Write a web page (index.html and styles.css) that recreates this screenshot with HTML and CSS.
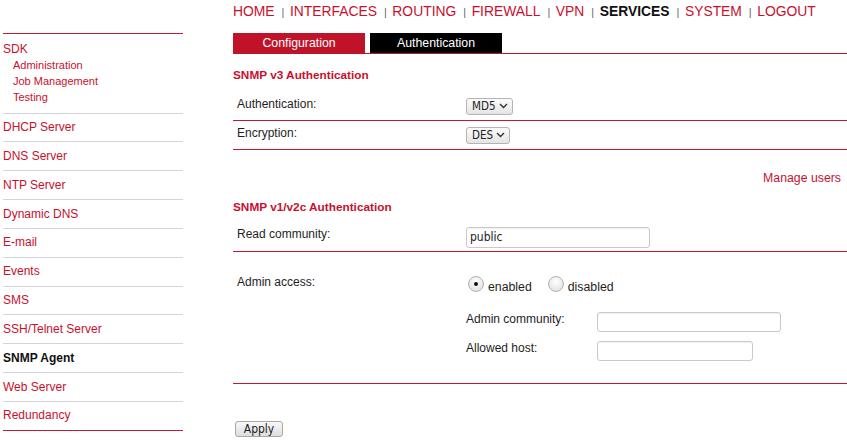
FILE: index.html
```html
<!DOCTYPE html>
<html>
<head>
<meta charset="utf-8">
<title>SNMP Agent</title>
<link rel="stylesheet" href="styles.css">
</head>
<body>
<div class="page">
  <nav class="topnav">
    <a class="nav-link">HOME</a><span class="sep">|</span>
    <a class="nav-link">INTERFACES</a><span class="sep">|</span>
    <a class="nav-link">ROUTING</a><span class="sep">|</span>
    <a class="nav-link">FIREWALL</a><span class="sep">|</span>
    <a class="nav-link">VPN</a><span class="sep">|</span>
    <a class="nav-link active">SERVICES</a><span class="sep">|</span>
    <a class="nav-link">SYSTEM</a><span class="sep">|</span>
    <a class="nav-link">LOGOUT</a>
  </nav>

  <aside class="side">
    <div class="side-group">
      <div class="side-title">SDK</div>
      <div class="side-sub">Administration</div>
      <div class="side-sub">Job Management</div>
      <div class="side-sub">Testing</div>
    </div>
    <div class="side-item">DHCP Server</div>
    <div class="side-item">DNS Server</div>
    <div class="side-item">NTP Server</div>
    <div class="side-item">Dynamic DNS</div>
    <div class="side-item">E-mail</div>
    <div class="side-item">Events</div>
    <div class="side-item">SMS</div>
    <div class="side-item">SSH/Telnet Server</div>
    <div class="side-item current">SNMP Agent</div>
    <div class="side-item">Web Server</div>
    <div class="side-item">Redundancy</div>
  </aside>

  <main class="main">
    <div class="tabs">
      <div class="tab tab-red">Configuration</div>
      <div class="tab tab-black">Authentication</div>
    </div>

    <div class="section-title first">SNMP v3 Authentication</div>
    <div class="row row-sel">
      <div class="label">Authentication:</div>
      <div class="ctrl"><span class="sel sel-md5">MD5<svg class="chev" width="9" height="6" viewBox="0 0 9 6"><path d="M1 1 L4.5 4.5 L8 1" fill="none" stroke="#333" stroke-width="1.4"/></svg></span></div>
    </div>
    <div class="row row-sel">
      <div class="label">Encryption:</div>
      <div class="ctrl"><span class="sel sel-des">DES<svg class="chev" width="9" height="6" viewBox="0 0 9 6"><path d="M1 1 L4.5 4.5 L8 1" fill="none" stroke="#333" stroke-width="1.4"/></svg></span></div>
    </div>

    <div class="manage"><a class="link">Manage users</a></div>

    <div class="section-title">SNMP v1/v2c Authentication</div>
    <div class="row row-input">
      <div class="label">Read community:</div>
      <div class="ctrl"><span class="txt txt-wide">public</span></div>
    </div>

    <div class="row admin">
      <div class="label admin-label">Admin access:</div>
      <div class="admin-right">
        <div class="radios">
          <span class="radio checked"></span><span class="radio-text">enabled</span>
          <span class="radio"></span><span class="radio-text">disabled</span>
        </div>
        <div class="pairs">
          <div class="pair-label">Admin community:</div>
          <div><span class="txt txt-wide small"></span></div>
          <div class="pair-label">Allowed host:</div>
          <div><span class="txt txt-narrow small"></span></div>
        </div>
      </div>
    </div>

    <div class="actions"><span class="btn">Apply</span></div>
  </main>
</div>
</body>
</html>
```

FILE: styles.css
```css
* { box-sizing: border-box; }
html, body { margin: 0; padding: 0; background: #fff; }
body {
  font-family: "Liberation Sans", Arial, sans-serif;
  color: #1e1e1e;
  width: 847px;
  height: 441px;
  overflow: hidden;
}
a { text-decoration: none; }

.page {
  display: grid;
  grid-template-columns: 180px 614px;
  grid-template-rows: 33px auto;
  column-gap: 50px;
  padding-left: 3px;
}

/* top navigation */
.topnav {
  grid-column: 2;
  grid-row: 1;
  display: flex;
  align-items: baseline;
  padding-top: 1px;
  font-size: 15.5px;
  line-height: 20px;
  white-space: nowrap;
  transform: scaleX(0.895);
  transform-origin: 0 0;
}
.nav-link {
  color: #c8102e;
  font-size: 15.5px;
}
.nav-link.active { color: #111; font-weight: bold; }
.sep {
  font-size: 10px;
  color: #444;
  margin: 0 6.5px 0 8px;
}

/* sidebar */
.side {
  grid-column: 1;
  grid-row: 2;
  border-top: 1px solid #c01b30;
  align-self: start;
}
.side-group {
  padding: 6.5px 0 8px;
  border-bottom: 1px solid #d3d3db;
}
.side-title {
  font-size: 12px;
  line-height: 16px;
  color: #c8102e;
}
.side-sub {
  font-size: 11px;
  line-height: 16px;
  padding-left: 10px;
  color: #c8102e;
}
.side-item {
  font-size: 12px;
  line-height: 16.85px;
  padding: 5.5px 0;
  color: #c8102e;
  border-bottom: 1px solid #d3d3db;
}
.side-item:last-child { border-bottom-color: #c01b30; }
.side-item.current { color: #111; font-weight: bold; }

/* main */
.main {
  grid-column: 2;
  grid-row: 2;
  font-size: 12px;
}
.tabs {
  display: flex;
  gap: 5px;
  border-bottom: 1px solid #b3182c;
}
.tab {
  width: 132px;
  height: 20px;
  line-height: 20px;
  text-align: center;
  color: #fff;
  font-size: 12.3px;
}
.tab-red { background: #c0132a; }
.tab-black { background: #000; }

.section-title {
  color: #c8102e;
  font-weight: bold;
  font-size: 11.8px;
  line-height: 16px;
  padding-top: 13px;
  padding-bottom: 8px;
}
.section-title.first { padding-top: 12.5px; padding-bottom: 9px; }

.row {
  display: grid;
  grid-template-columns: 233px 1fr;
  border-bottom: 1px solid #c41a30;
}
.row-sel { height: 29px; }
.row-input { height: 29px; }
.label {
  padding-left: 4px;
  line-height: 15px;
  padding-top: 4px;
  font-size: 12px;
}
.row-sel .label { padding-top: 5px; }
.ctrl {
  display: flex;
  align-items: center;
}

.sel {
  display: inline-flex;
  align-items: center;
  justify-content: space-between;
  height: 17px;
  padding: 0 4px 0 5px;
  border: 1px solid #b4b4b4;
  border-radius: 3px;
  background: linear-gradient(#fbfbfb, #e4e4e4);
  font-family: "DejaVu Sans Condensed", "DejaVu Sans", sans-serif;
  font-stretch: condensed;
  font-size: 11.5px;
  color: #222;
  margin-top: 1px;
}
.sel-md5 { width: 47px; }
.sel-des { width: 44px; }
.chev { display: block; }

.txt {
  display: block;
  height: 21px;
  border: 1px solid #c9c9c9;
  border-radius: 3px;
  background: #fff;
  box-shadow: inset 0 1px 1px rgba(0,0,0,0.06);
  font-family: "DejaVu Sans Condensed", "DejaVu Sans", sans-serif;
  font-stretch: condensed;
  font-size: 12px;
  line-height: 19px;
  padding: 0 3px;
  color: #222;
}
.txt-wide { width: 184px; }
.txt-narrow { width: 156px; }
.txt.small { height: 20px; }

.row-input .ctrl { margin-top: 2px; }

.manage {
  text-align: right;
  padding-right: 6px;
  padding-top: 20px;
  line-height: 16px;
  font-size: 12.3px;
}
.link { color: #c8102e; }

.admin { padding-bottom: 22px; }
.admin-label { padding-top: 23.5px; }
.admin-right { padding-top: 23px; }
.radios {
  display: flex;
  align-items: flex-end;
  height: 17px;
  margin-left: 2px;
}
.radio {
  width: 16px;
  height: 16px;
  border-radius: 50%;
  border: 1px solid #b0b0b0;
  background: radial-gradient(circle at 50% 35%, #ffffff, #dcdcdc);
  position: relative;
  flex: none;
}
.radio.checked::after {
  content: "";
  position: absolute;
  left: 5px;
  top: 5px;
  width: 4px;
  height: 4px;
  border-radius: 50%;
  background: #111;
}
.radio-text {
  font-size: 12.3px;
  line-height: 14px;
  margin: 0 16px 0 4px;
  position: relative;
  top: 2px;
}
.pairs {
  display: grid;
  grid-template-columns: 131px auto;
  row-gap: 9px;
  margin-top: 20px;
}
.pair-label {
  line-height: 14px;
  font-size: 12px;
}

.actions { padding: 37px 0 0 2px; }
.btn {
  display: inline-block;
  width: 48px;
  height: 16px;
  line-height: 14px;
  text-align: center;
  border: 1px solid #a8a8a8;
  border-radius: 3px;
  background: linear-gradient(#f8f8f8, #dedede);
  font-family: "DejaVu Sans Condensed", "DejaVu Sans", sans-serif;
  font-stretch: condensed;
  font-size: 12px;
  color: #222;
}
```
